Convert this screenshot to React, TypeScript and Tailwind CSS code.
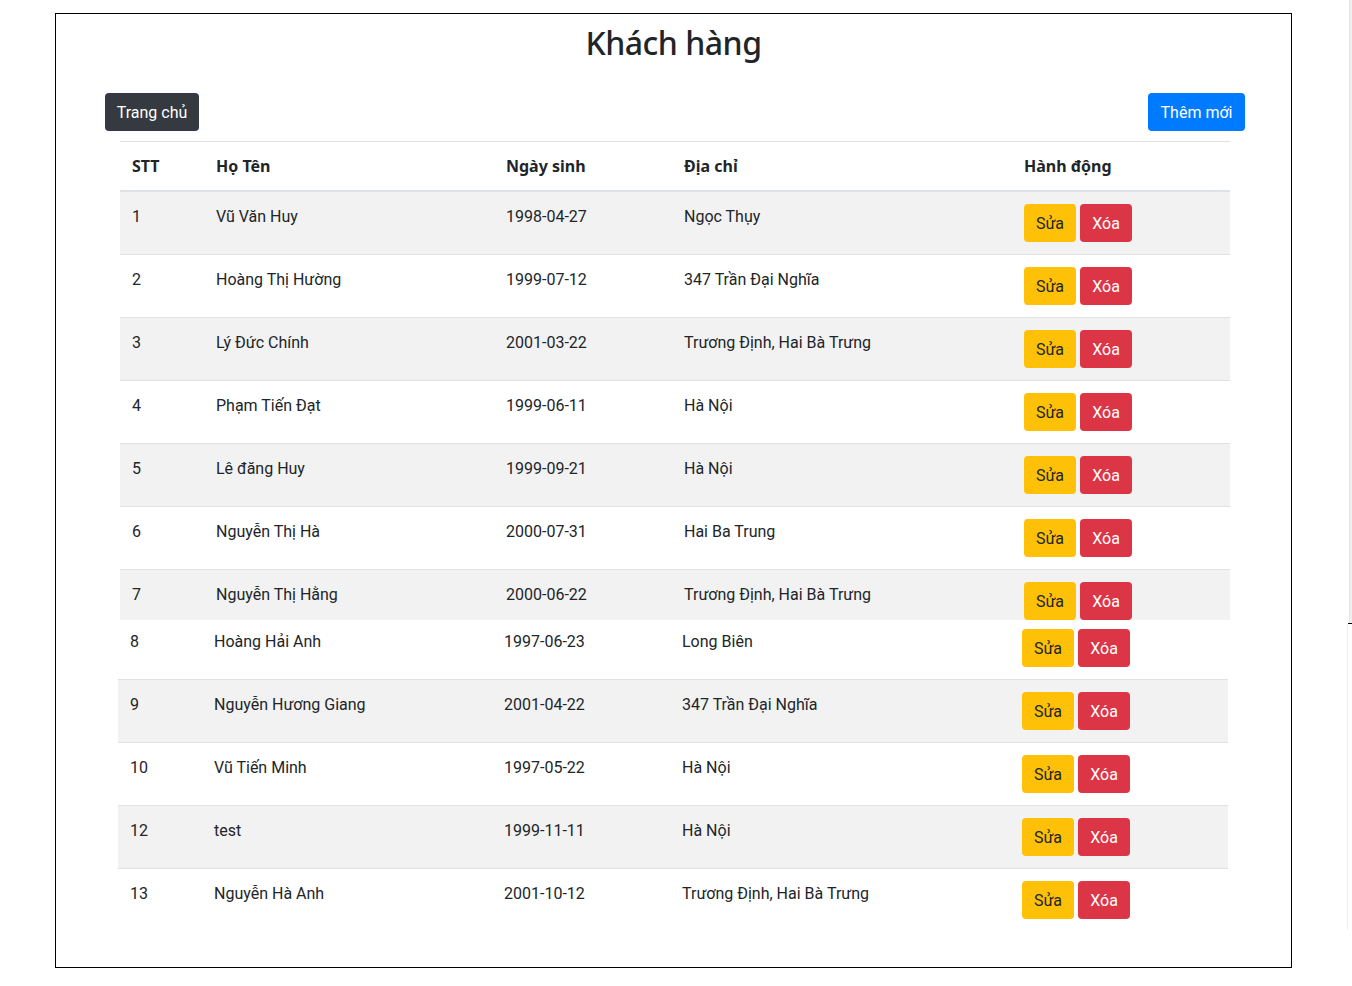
import React from "react";

type Row = { stt: string; name: string; dob: string; addr: string };

const seg1: Row[] = [
  { stt: "1", name: "Vũ Văn Huy", dob: "1998-04-27", addr: "Ngọc Thụy" },
  { stt: "2", name: "Hoàng Thị Hường", dob: "1999-07-12", addr: "347 Trần Đại Nghĩa" },
  { stt: "3", name: "Lý Đức Chính", dob: "2001-03-22", addr: "Trương Định, Hai Bà Trưng" },
  { stt: "4", name: "Phạm Tiến Đạt", dob: "1999-06-11", addr: "Hà Nội" },
  { stt: "5", name: "Lê đăng Huy", dob: "1999-09-21", addr: "Hà Nội" },
  { stt: "6", name: "Nguyễn Thị Hà", dob: "2000-07-31", addr: "Hai Ba Trung" },
  { stt: "7", name: "Nguyễn Thị Hằng", dob: "2000-06-22", addr: "Trương Định, Hai Bà Trưng" },
];

const seg2: Row[] = [
  { stt: "8", name: "Hoàng Hải Anh", dob: "1997-06-23", addr: "Long Biên" },
  { stt: "9", name: "Nguyễn Hương Giang", dob: "2001-04-22", addr: "347 Trần Đại Nghĩa" },
  { stt: "10", name: "Vũ Tiến Minh", dob: "1997-05-22", addr: "Hà Nội" },
  { stt: "12", name: "test", dob: "1999-11-11", addr: "Hà Nội" },
  { stt: "13", name: "Nguyễn Hà Anh", dob: "2001-10-12", addr: "Trương Định, Hai Bà Trưng" },
];

function Cells({ r }: { r: Row }) {
  return (
    <>
      <div className="w-[84px] px-3 pt-px leading-6">{r.stt}</div>
      <div className="w-[290px] px-3 pt-px leading-6">{r.name}</div>
      <div className="w-[178px] px-3 pt-px leading-6">{r.dob}</div>
      <div className="w-[340px] px-3 pt-px leading-6">{r.addr}</div>
      <div className="w-[218px] px-3 flex gap-1">
        <button className="h-[38px] w-[52px] pt-px rounded bg-[#ffc107] text-[#212529] text-base">Sửa</button>
        <button className="h-[38px] w-[52px] pt-px rounded bg-[#dc3545] text-white text-base">Xóa</button>
      </div>
    </>
  );
}

export default function App() {
  return (
    <div
      className="relative min-h-screen w-full bg-white text-[#212529] text-base"
      style={{ fontFamily: 'Roboto, "Noto Sans", sans-serif' }}
    >
      <div className="absolute right-0 top-0 h-[623px] w-[3px] bg-[#f0f0f0] border-l border-[#e6e6e6]" />
      <div className="absolute right-0 top-[623px] h-px w-[4px] bg-black" />
      <div className="absolute right-[4px] top-[624px] h-[306px] w-px bg-[#eeeeee]" />

      <div className="pt-[13px] pl-[55px]">
        <div className="w-[1237px] h-[955px] border border-black">
          <h2
            className="pt-[10px] text-center text-[32px] font-medium leading-[1.2]"
            style={{ fontFamily: '"Noto Sans", sans-serif' }}
          >
            <span className="inline-block tracking-[-0.5px]">Khách hàng</span>
          </h2>
          <div className="mt-[31px] ml-[49px] w-[1140px] flex justify-between">
            <button className="h-[38px] w-[94px] pt-px rounded bg-[#343a40] text-white text-base">Trang chủ</button>
            <button className="h-[38px] w-[97px] pt-px rounded bg-[#007bff] text-white text-base">Thêm mới</button>
          </div>
          <div className="mt-[10px] ml-[64px] w-[1110px]">
            <div
              className="flex border-t border-b-2 border-[#dee2e6] py-3 font-bold leading-6"
              style={{ fontFamily: '"Noto Sans", sans-serif' }}
            >
              <div className="w-[84px] px-3">STT</div>
              <div className="w-[290px] px-3">Họ Tên</div>
              <div className="w-[178px] px-3">Ngày sinh</div>
              <div className="w-[340px] px-3">Địa chỉ</div>
              <div className="w-[218px] px-3">Hành động</div>
            </div>
            {seg1.map((r, i) => (
              <div
                key={r.stt}
                className={
                  "flex items-start " +
                  (i === 0 ? "" : "border-t border-[#dee2e6] ") +
                  (i % 2 === 0 ? "bg-[#f2f2f2] " : "bg-white ") +
                  (i === seg1.length - 1 ? "pt-3 h-[51px]" : "py-3")
                }
              >
                <Cells r={r} />
              </div>
            ))}
          </div>
          <div className="ml-[62px] w-[1110px]">
            {seg2.map((r, i) => (
              <div
                key={r.stt}
                className={
                  "flex items-start " +
                  (i === 0 ? "pt-[9px] pb-3 " : "border-t border-[#dee2e6] py-3 ") +
                  (i % 2 === 1 ? "bg-[#f2f2f2]" : "bg-white")
                }
              >
                <Cells r={r} />
              </div>
            ))}
          </div>
        </div>
      </div>
    </div>
  );
}
